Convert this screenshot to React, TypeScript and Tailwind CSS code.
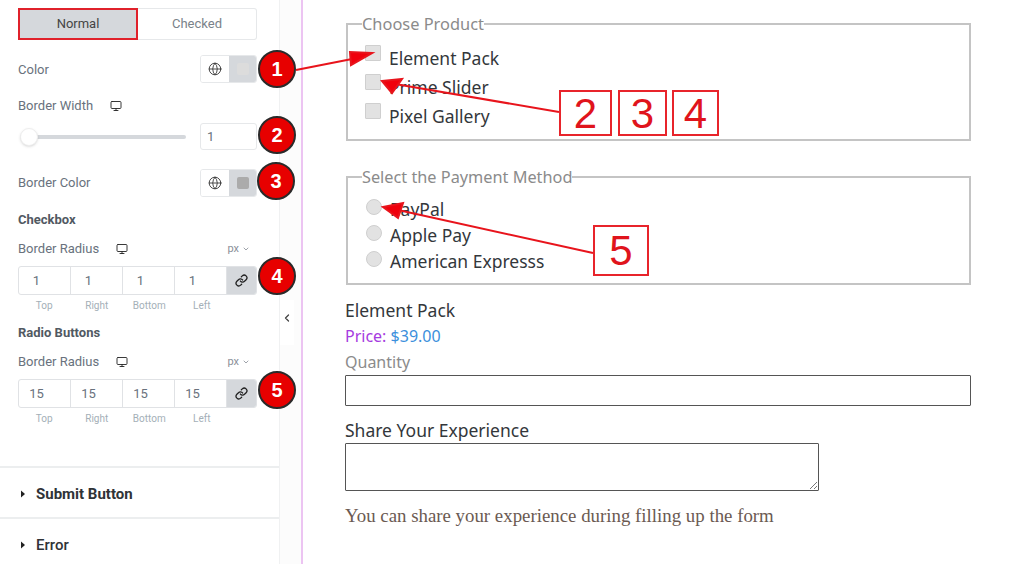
import { ChevronDown, ChevronLeft, Globe, Link, Monitor } from "lucide-react";

const ui = "font-['Roboto',sans-serif]";

function Label({ text, device }: { text: string; device?: boolean }) {
  return (
    <div className="flex items-center gap-[17px] text-[13px] leading-[14px] text-[#69727d]">
      <span>{text}</span>
      {device && <Monitor size={12} strokeWidth={1.8} className="text-[#222]" />}
    </div>
  );
}

function ColorControl({ swatch }: { swatch: string }) {
  return (
    <div className="flex h-[28px] w-[57px] overflow-hidden rounded-[3px] border border-[#e6e8ea]">
      <div className="flex w-[28px] items-center justify-center bg-white">
        <Globe size={14} strokeWidth={1.5} className="text-[#333]" />
      </div>
      <div className="flex flex-1 items-center justify-center bg-[#d5d8dc]">
        <div className={`h-[12px] w-[12px] rounded-[2px] ${swatch}`} />
      </div>
    </div>
  );
}

function RadiusGroup({ title, value, mtop }: { title: string; value: string; mtop: string }) {
  return (
    <div className={mtop}>
      <div className="text-[13px] font-bold leading-[14px] text-[#515962]">{title}</div>
      <div className="mt-[15px] flex h-[14px] w-[239px] items-center justify-between pr-[7px]">
        <Label text="Border Radius" device />
        <div className="flex items-center gap-[3px] text-[11px] text-[#8a9099]">
          px <ChevronDown size={8} strokeWidth={2.5} />
        </div>
      </div>
      <div className="mt-[10px] flex h-[29px] w-[239px] overflow-hidden rounded-[3px] border border-[#e0e2e5] text-[13px] text-[#69727d]">
        {[0, 1, 2, 3].map((i) => (
          <div key={i} className="flex w-[52px] items-center justify-center border-r border-[#e0e2e5] pr-[16px]">
            {value}
          </div>
        ))}
        <div className="flex flex-1 items-center justify-center bg-[#d5d8dc]">
          <Link size={13} strokeWidth={2.4} className="text-[#222]" />
        </div>
      </div>
      <div className="mt-[4px] flex w-[211px] text-[10px] leading-[14px] text-[#a4afb7]">
        {["Top", "Right", "Bottom", "Left"].map((t) => (
          <div key={t} className="w-[52.5px] text-center">
            {t}
          </div>
        ))}
      </div>
    </div>
  );
}

function Section({ title, bold }: { title: string; bold?: boolean }) {
  return (
    <div className="flex h-[51px] shrink-0 items-center gap-[10px] border-t-2 border-[#eceeef] pl-[20px] pt-[3px] text-[15px] text-[#2f3337]">
      <svg width="6" height="8" viewBox="0 0 6 8">
        <path d="M1 0.5 L5 4 L1 7.5 Z" fill="#222" />
      </svg>
      <span className={bold ? "font-bold" : "font-medium"}>{title}</span>
    </div>
  );
}

function Panel() {
  return (
    <aside className={`${ui} flex h-full w-[280px] shrink-0 flex-col overflow-hidden border-r border-[#f0f1f2] bg-white`}>
      <div className="h-[466px] shrink-0 pl-[18px] pt-[8px]">
        <div className="flex h-[32px] w-[239px] text-[13px]">
          <div className="flex w-[120px] items-center justify-center border-2 border-[#e0212b] bg-[#d5d8dc] text-[#444]">
            Normal
          </div>
          <div className="flex flex-1 items-center justify-center rounded-r-[3px] border border-l-0 border-[#e6e8ea] text-[#7a828a]">
            Checked
          </div>
        </div>
        <div className="mt-[15px] flex w-[239px] items-center justify-between">
          <div className="pt-[1px]">
            <Label text="Color" />
          </div>
          <ColorControl swatch="bg-[#dcdcdc]" />
        </div>
        <div className="mt-[16px] h-[14px]">
          <Label text="Border Width" device />
        </div>
        <div className="mt-[10px] flex h-[27px] w-[239px] items-center justify-between">
          <div className="relative h-[4px] w-[166px] translate-x-[2px] rounded-full bg-[#d5d8dc]">
            <div className="absolute left-0 top-[-7px] h-[18px] w-[18px] rounded-full border border-[#eee] bg-white shadow-sm" />
          </div>
          <div className="flex h-[27px] w-[57px] items-center rounded-[3px] border border-[#e6e8ea] pl-[6px] text-[13px] text-[#69727d]">
            1
          </div>
        </div>
        <div className="mt-[19px] flex w-[239px] items-center justify-between">
          <Label text="Border Color" />
          <ColorControl swatch="bg-[#ababab]" />
        </div>
        <RadiusGroup title="Checkbox" value="1" mtop="mt-[16px]" />
        <RadiusGroup title="Radio Buttons" value="15" mtop="mt-[13px]" />
      </div>
      <Section title="Submit Button" bold />
      <Section title="Error" />
    </aside>
  );
}

function Choice({ label, round }: { label: string; round?: boolean }) {
  return (
    <div className={`flex items-center gap-[8px] ${round ? "h-[26px]" : "h-[29px]"}`}>
      <span
        className={`h-[16px] w-[16px] border border-[#cfcfcf] bg-[#e2e2e2] ${round ? "-translate-y-[2px] rounded-full" : "-translate-y-[6px] rounded-[1px]"}`}
      />
      <span>{label}</span>
    </div>
  );
}

function Box({ n, cls }: { n: string; cls: string }) {
  return (
    <div className={`absolute flex items-center justify-center border-2 border-[#e8242b] bg-white/80 font-['Liberation_Sans',sans-serif] text-[42px] text-[#e0141c] ${cls}`}>
      {n}
    </div>
  );
}

function Badge({ n, cls }: { n: string; cls: string }) {
  return (
    <div className={`absolute flex h-[38px] w-[38px] items-center justify-center rounded-full border-2 border-[#2a2a2a] bg-[#e70000] font-['Liberation_Sans',sans-serif] text-[20px] font-bold text-white ${cls}`}>
      {n}
    </div>
  );
}

export default function App() {
  return (
    <div className="relative flex h-[564px] w-[1024px] overflow-hidden bg-white">
      <Panel />
      <div className="flex w-[21px] shrink-0 flex-col items-start bg-[#fcfcfc]">
        <div className="mt-[300px] flex h-[45px] w-[14px] items-center justify-center bg-white pb-[10px] text-[#444]">
          <ChevronLeft size={12} strokeWidth={2.6} />
        </div>
      </div>
      <main className="h-full flex-1 border-l-2 border-[#ecc4f2] pl-[43px] font-['Noto_Sans',sans-serif] text-[17.5px] text-[#33373b]">
        <fieldset className="mt-[14px] h-[127px] w-[625px] border-2 border-[#c4c4c4] pl-[17px]">
          <legend className="ml-[-3px] text-[16.4px] leading-[20px] text-[#8b8b8b]">Choose Product</legend>
          <div className="pt-[10px]">
            <Choice label="Element Pack" />
            <Choice label="Prime Slider" />
            <Choice label="Pixel Gallery" />
          </div>
        </fieldset>
        <fieldset className="mt-[26px] h-[118px] w-[625px] border-2 border-[#c4c4c4] pl-[18px]">
          <legend className="ml-[-4px] text-[16.3px] leading-[20px] text-[#8b8b8b]">Select the Payment Method</legend>
          <div className="pt-[9px]">
            <Choice label="PayPal" round />
            <Choice label="Apple Pay" round />
            <Choice label="American Expresss" round />
          </div>
        </fieldset>
        <div className="ml-[-1px] mt-[12px] leading-[26px]">Element Pack</div>
        <div className="ml-[-1px] text-[16px] leading-[26px] text-[#3b8fdc]">
          <span className="text-[#a63be0]">Price:</span> $39.00
        </div>
        <div className="ml-[-1px] text-[16px] leading-[26px] text-[#8b8b8b]">Quantity</div>
        <div className="ml-[-1px] h-[31px] w-[626px] rounded-[1px] border border-[#555]" />
        <div className="ml-[-1px] mt-[11px] leading-[26px]">Share Your Experience</div>
        <div className="relative ml-[-1px] h-[48px] w-[474px] rounded-[1px] border border-[#555]">
          <svg className="absolute bottom-[1px] right-[1px]" width="8" height="8" viewBox="0 0 8 8">
            <path d="M1 8 L8 1 M5 8 L8 5" stroke="#777" strokeWidth="1" />
          </svg>
        </div>
        <p className="ml-[-1px] mt-[13px] font-['Liberation_Serif',serif] text-[18.85px] leading-[24px] text-[#6b5a52]">
          You can share your experience during filling up the form
        </p>
      </main>

      <svg className="absolute left-0 top-0" width="1024" height="564" viewBox="0 0 1024 564">
        <g stroke="#e8141c" strokeWidth="2" fill="#f0000c">
          <line x1="296" y1="70" x2="352" y2="59" />
          <path d="M372 53 L350 52 L351 65 Z" />
          <line x1="559" y1="112" x2="395" y2="84" />
          <path d="M382 81 L402 79 L392 93 Z" />
          <line x1="593" y1="253" x2="398" y2="210" />
          <path d="M383 207 L403 203 L398 218 Z" />
        </g>
      </svg>
      <Box n="2" cls="left-[559px] top-[90px] h-[46px] w-[53px]" />
      <Box n="3" cls="left-[618px] top-[90px] h-[46px] w-[49px]" />
      <Box n="4" cls="left-[672px] top-[90px] h-[46px] w-[47px]" />
      <Box n="5" cls="left-[593px] top-[225px] h-[51px] w-[56px]" />
      <Badge n="1" cls="left-[258px] top-[50px]" />
      <Badge n="2" cls="left-[258px] top-[116px]" />
      <Badge n="3" cls="left-[257px] top-[162px]" />
      <Badge n="4" cls="left-[258px] top-[257px]" />
      <Badge n="5" cls="left-[258px] top-[371px]" />
    </div>
  );
}
